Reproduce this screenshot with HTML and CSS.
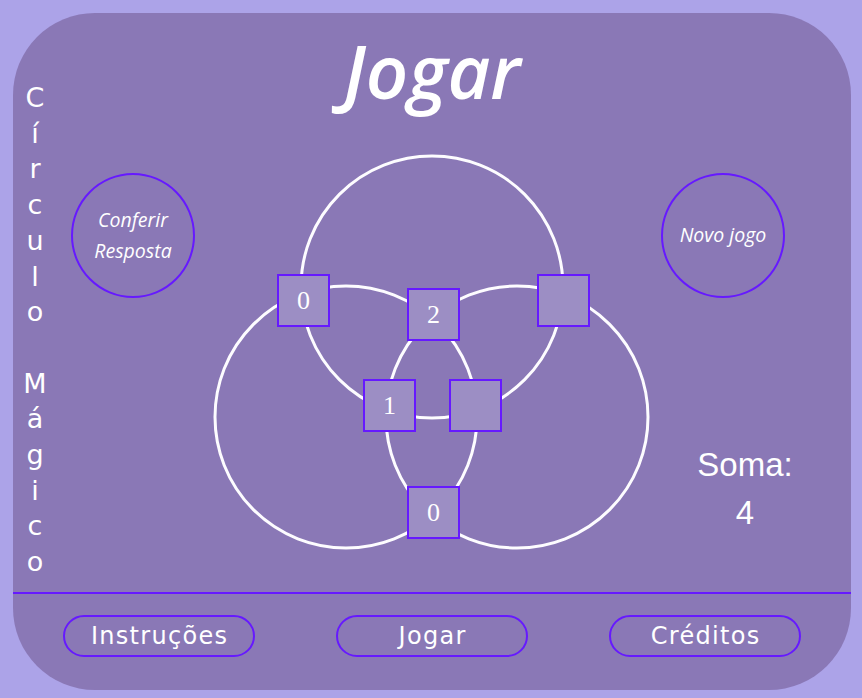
FILE: index.html
```html
<!DOCTYPE html>
<html lang="pt">
<head>
<meta charset="utf-8">
<title>Círculo Mágico - Jogar</title>
<link rel="stylesheet" href="styles.css">
</head>
<body>
<div class="panel">
  <div class="main">
    <div class="side-title">
      <div class="word"><span>C</span><span>í</span><span>r</span><span>c</span><span>u</span><span>l</span><span>o</span></div>
      <div class="word"><span>M</span><span>á</span><span>g</span><span>i</span><span>c</span><span>o</span></div>
    </div>
    <h1 class="title">Jogar</h1>
    <div class="content">
      <div class="left-col">
        <button class="round-btn">Conferir<br>Resposta</button>
      </div>
      <div class="diagram">
        <svg class="venn" width="440" height="400" viewBox="0 0 440 400">
          <circle cx="220" cy="135" r="131"/>
          <circle cx="134" cy="265" r="131"/>
          <circle cx="305" cy="265" r="131"/>
        </svg>
        <div class="cell c1">0</div>
        <div class="cell c2">2</div>
        <div class="cell c3"></div>
        <div class="cell c4">1</div>
        <div class="cell c5"></div>
        <div class="cell c6">0</div>
      </div>
      <div class="right-col">
        <button class="round-btn">Novo jogo</button>
        <div class="soma">
          <div>Soma:</div>
          <div>4</div>
        </div>
      </div>
    </div>
  </div>
  <nav class="footer">
    <button class="pill">Instruções</button>
    <button class="pill">Jogar</button>
    <button class="pill">Créditos</button>
  </nav>
</div>
</body>
</html>
```

FILE: styles.css
```css
* { box-sizing: border-box; }

html, body {
  margin: 0;
  padding: 0;
}

body {
  background: #aca3e8;
  width: 862px;
  height: 698px;
  padding: 13px 11px 8px 13px;
  font-family: "Liberation Sans", Arial, sans-serif;
  color: #fff;
}

.panel {
  width: 838px;
  height: 677px;
  background: #8a78b6;
  border-radius: 82px;
  display: flex;
  flex-direction: column;
}

.main {
  height: 579px;
  display: grid;
  grid-template-columns: 44px 1fr 44px;
  grid-template-rows: 108px 1fr;
}

.side-title {
  grid-column: 1;
  grid-row: 1 / span 2;
  padding-top: 67px;
  display: flex;
  flex-direction: column;
  gap: 35.7px;
  font-family: "DejaVu Sans", sans-serif;
  font-size: 27px;
  line-height: 35.7px;
  text-align: center;
}

.side-title .word span {
  display: block;
}

.title {
  grid-column: 2;
  grid-row: 1;
  margin: 0;
  padding-top: 8px;
  font-family: "Open Sans", sans-serif;
  font-style: italic;
  font-weight: 600;
  font-size: 74px;
  line-height: 100px;
  text-align: center;
  color: #fff;
}

.content {
  grid-column: 2;
  grid-row: 2;
  display: flex;
}

.left-col {
  width: 155px;
  padding: 52px 0 0 14px;
}

.right-col {
  width: 155px;
  padding: 52px 0 0 9px;
}

.round-btn {
  width: 124px;
  height: 125px;
  border-radius: 50%;
  border: 2px solid #6619ff;
  background: transparent;
  color: #fff;
  font-family: "Open Sans", sans-serif;
  font-style: italic;
  font-size: 19.5px;
  line-height: 31px;
  padding: 0 0 2px 0;
  display: flex;
  align-items: center;
  justify-content: center;
  text-align: center;
}

.diagram {
  position: relative;
  width: 440px;
  height: 400px;
  margin-top: 31px;
}

.venn {
  display: block;
}

.venn circle {
  fill: none;
  stroke: #fdfcff;
  stroke-width: 3;
}

.cell {
  position: absolute;
  width: 53px;
  height: 53px;
  background: #9c8ec4;
  border: 2px solid #6619ff;
  display: flex;
  align-items: center;
  justify-content: center;
  font-family: "Liberation Serif", "Times New Roman", serif;
  font-size: 26px;
  color: #fff;
}

.c1 { left: 65px;  top: 122px; }
.c2 { left: 195px; top: 136px; }
.c3 { left: 325px; top: 122px; }
.c4 { left: 151px; top: 227px; }
.c5 { left: 237px; top: 227px; }
.c6 { left: 195px; top: 334px; }

.soma {
  width: 120px;
  margin: 143px 0 0 24px;
  font-size: 33px;
  line-height: 48px;
  text-align: center;
}

.footer {
  border-top: 2px solid #6619ff;
  height: 98px;
  padding: 21px 50px 0;
  display: flex;
  justify-content: space-between;
  align-items: flex-start;
}

.pill {
  width: 192px;
  height: 42px;
  border: 2px solid #6619ff;
  border-radius: 21px;
  background: transparent;
  color: #fff;
  font-family: "DejaVu Sans", sans-serif;
  font-size: 24px;
  letter-spacing: 1.3px;
  padding: 0 0 0 1.3px;
  line-height: 38px;
  text-align: center;
}
```
